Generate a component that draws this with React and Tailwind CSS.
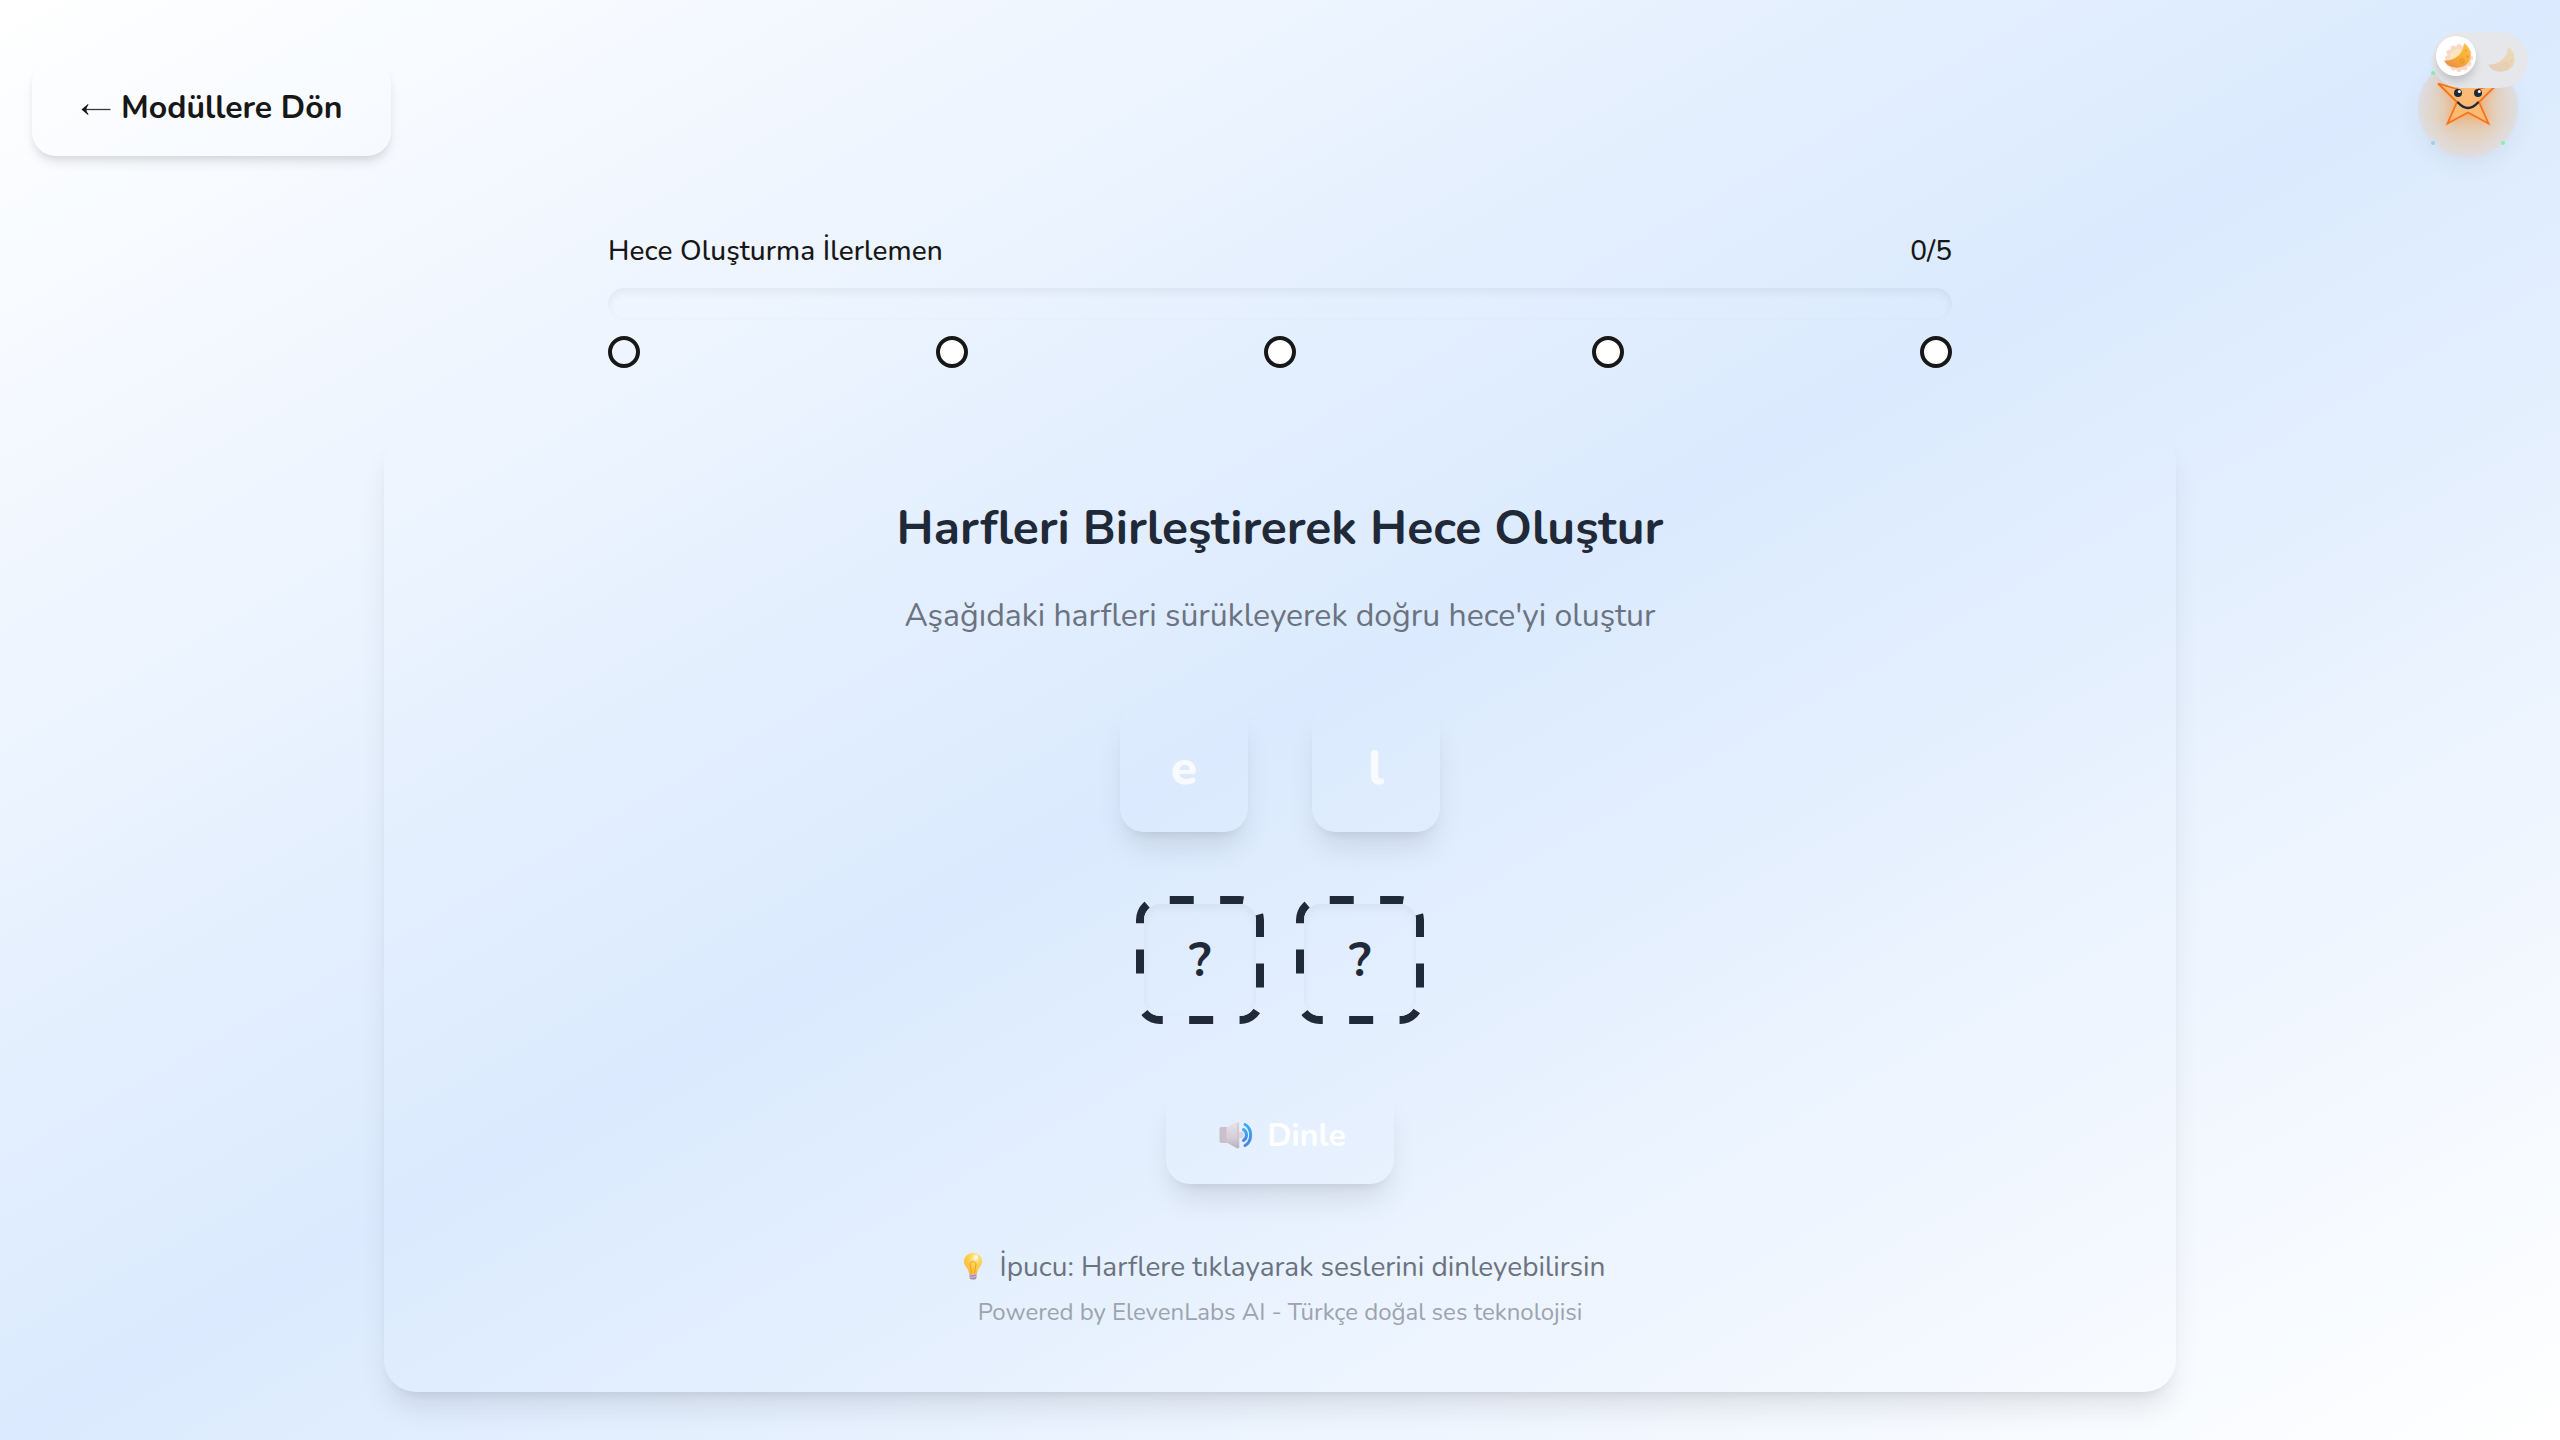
const SHADOW_LG = 'shadow-[0_20px_30px_-6px_rgba(0,0,0,0.1),0_8px_12px_-8px_rgba(0,0,0,0.1)]';
const SHADOW_MD = 'shadow-[0_8px_12px_-2px_rgba(0,0,0,0.1),0_4px_8px_-4px_rgba(0,0,0,0.1)]';

function ArrowLeft() {
  return (
    <svg width="32" height="16" viewBox="0 0 32 16" className="relative top-[2px] mr-[9px] shrink-0" aria-hidden="true">
      <path d="M6 7.500H30.5" stroke="#171717" strokeWidth="1.300" opacity="0.85" />
      <path d="M1.5 7.500L8 1.900L8.500 2.700C7 4.800 6.400 6.100 6.400 7.500C6.400 8.900 7 10.200 8.500 12.300L8 13.100Z" fill="#171717" />
    </svg>
  );
}

function Moon({ className }) {
  return (
    <svg width="40" height="40" viewBox="0 0 40 40" className={className} aria-hidden="true">
      <defs>
        <linearGradient id="moonFill" x1="0.9" y1="0.1" x2="0.3" y2="1">
          <stop offset="0" stopColor="#fbc04a" />
          <stop offset="0.55" stopColor="#f7ad34" />
          <stop offset="1" stopColor="#e8914a" />
        </linearGradient>
      </defs>
      <path d="M28 7C36.5 12.5 37 25 29 29.5C22 33.5 12.5 32 8 24.5C18 25.500 27.500 18.500 28 7Z" fill="url(#moonFill)" />
      <circle cx="26" cy="25" r="2.4" fill="#f2a032" stroke="#dd8b2e" strokeWidth="0.6" />
      <circle cx="31.6" cy="20.5" r="1.3" fill="#ee9a31" />
      <circle cx="18.5" cy="28.5" r="1.4" fill="#ee9a31" />
      <circle cx="30" cy="14.5" r="1" fill="#ee9a31" />
    </svg>
  );
}

function Sun() {
  const rays = Array.from({ length: 12 }, (_, i) => (i * Math.PI) / 6);
  return (
    <svg width="40" height="40" viewBox="0 0 40 40" className="absolute inset-0" aria-hidden="true">
      <g fill="#fad8c5">
        <circle cx="23" cy="22" r="12" />
        {rays.map((a) => (
          <circle key={a} cx={23 + 11.4 * Math.cos(a)} cy={22 + 11.4 * Math.sin(a)} r="2.6" />
        ))}
      </g>
      <circle cx="23" cy="22" r="9.3" fill="#fae6bd" />
    </svg>
  );
}

function StarMascot() {
  return (
    <div className="absolute left-[2418px] top-[58px] h-[100px] w-[100px]">
      <div className="h-full w-full rounded-full bg-[radial-gradient(circle,rgba(245,158,50,0.55)_0%,rgba(228,150,75,0.16)_70%)] shadow-[0_8px_24px_rgba(0,0,0,0.05)]" />
      <svg width="100" height="100" viewBox="0 0 100 100" className="absolute inset-0 drop-shadow-[0_0_6px_rgba(249,115,22,0.4)]" aria-hidden="true">
        <path
          d="M50 0L61 31L80 25.500L61 44L70.500 65.500L50 54.500L29.500 65.500L39 44L20 25.500L39 31Z"
          fill="#fdba74"
          stroke="#f97316"
          strokeWidth="1.8"
        />
        <circle cx="40" cy="35" r="4" fill="#1f2937" />
        <circle cx="60" cy="35" r="4" fill="#1f2937" />
        <circle cx="41.300" cy="33.500" r="1.500" fill="#fff" />
        <circle cx="61.300" cy="33.500" r="1.500" fill="#fff" />
        <path d="M40 44.500Q50 55.500 60 44.500" fill="none" stroke="#1f2937" strokeWidth="2.300" strokeLinecap="round" />
      </svg>
      <span className="absolute left-[13px] top-[13px] h-[4px] w-[4px] rounded-full bg-[#86efac]" />
      <span className="absolute left-[13px] top-[83px] h-[4px] w-[4px] rounded-full bg-[#93d0fd]" />
      <span className="absolute left-[83px] top-[83px] h-[4px] w-[4px] rounded-full bg-[#86efac]" />
    </div>
  );
}

function ThemeToggle() {
  return (
    <div className="absolute left-[2432px] top-[32px] h-[56px] w-[96px] rounded-full bg-[#e5e7eb]">
      <div className="absolute left-[4px] top-[4px] h-[40px] w-[40px] rounded-full bg-white shadow-[0_8px_12px_-2px_rgba(0,0,0,0.12),0_4px_8px_-2px_rgba(0,0,0,0.1)]">
        <Sun />
        <Moon className="absolute inset-0" />
      </div>
      <Moon className="absolute left-[48px] top-[8px] opacity-30" />
    </div>
  );
}

function Speaker() {
  return (
    <svg width="34" height="32" viewBox="0 0 34 32" className="shrink-0" aria-hidden="true">
      <defs>
        <linearGradient id="cone" x1="0" y1="0" x2="0" y2="1">
          <stop offset="0" stopColor="#e9e4ea" />
          <stop offset="0.6" stopColor="#d6cedb" />
          <stop offset="1" stopColor="#b9adbf" />
        </linearGradient>
        <linearGradient id="wave" x1="0" y1="0" x2="0" y2="1">
          <stop offset="0" stopColor="#35aef5" />
          <stop offset="1" stopColor="#4a83ea" />
        </linearGradient>
      </defs>
      <g fill="none" stroke="url(#wave)" strokeWidth="3" strokeLinecap="round">
        <path d="M26 4.500C33.500 8.500 33.500 21.500 26 25.500" />
        <path d="M24.500 9.500C28.500 12 28.500 18 24.500 20.500" />
      </g>
      <circle cx="21.500" cy="15" r="3.300" fill="#dcd5df" />
      <rect x="0.500" y="7" width="9" height="16" rx="1.800" fill="#c9c0cc" />
      <path d="M7.500 7.500L18 1.800C19.300 1.200 20.300 2 20.300 3.200V26.800C20.300 28 19.300 28.800 18 28.200L7.500 22.500Z" fill="url(#cone)" />
      <path d="M18.900 3V27" stroke="#c3b9c8" strokeWidth="0.800" />
    </svg>
  );
}

function Bulb() {
  return (
    <svg width="20" height="30" viewBox="0 0 20 30" className="shrink-0" aria-hidden="true">
      <defs>
        <radialGradient id="glass" cx="0.62" cy="0.25" r="0.8">
          <stop offset="0" stopColor="#fff3b0" />
          <stop offset="0.4" stopColor="#ffd257" />
          <stop offset="1" stopColor="#fdb52e" />
        </radialGradient>
      </defs>
      <rect x="6.500" y="20" width="7" height="7.500" rx="2" fill="#a58fb0" />
      <path d="M6.500 23L13.500 22M6.800 25.500L13.300 24.500" stroke="#d4c4dc" strokeWidth="0.900" />
      <path d="M10 1C15 1 19 4.800 19 9.600C19 14.500 14.500 16 14 21.500C12 22.500 8 22.500 6 21.500C5.500 16 1 14.500 1 9.600C1 4.800 5 1 10 1Z" fill="url(#glass)" />
      <path d="M8.500 21L7 12C7 9 13 9 13 12L11.500 21" fill="none" stroke="#f2a021" strokeWidth="1" />
      <ellipse cx="13" cy="5.500" rx="2" ry="2.600" fill="#fffbe5" />
    </svg>
  );
}

function LetterTile({ letter }) {
  return (
    <div className={`flex h-32 w-32 items-center justify-center rounded-3xl text-[48px] leading-[64px] font-extrabold text-[#f9fafb] ${SHADOW_LG}`}>
      {letter}
    </div>
  );
}

function DropSlot() {
  return (
    <div className="relative flex h-32 w-32 items-center justify-center rounded-3xl border-8 border-transparent text-[48px] leading-[64px] font-bold text-[#1f2937] shadow-[inset_0_4px_8px_rgba(0,0,0,0.05)]">
      <svg width="128" height="128" viewBox="0 0 128 128" className="absolute -left-2 -top-2" aria-hidden="true">
        <clipPath id="slotRing">
          <path
            clipRule="evenodd"
            d="M0 104V24A24 24 0 0 1 24 0H104A24 24 0 0 1 128 24V104A24 24 0 0 1 104 128H24A24 24 0 0 1 0 104ZM8 104V24A16 16 0 0 1 24 8H104A16 16 0 0 1 120 24V104A16 16 0 0 1 104 120H24A16 16 0 0 1 8 104Z"
          />
        </clipPath>
        <path
          clipPath="url(#slotRing)"
          d="M0 104V24A24 24 0 0 1 24 0H104A24 24 0 0 1 128 24V104A24 24 0 0 1 104 128H24A24 24 0 0 1 0 104"
          fill="none"
          stroke="#1f2937"
          strokeWidth="16"
          strokeDasharray="24 26.4"
          strokeDashoffset="24"
        />
      </svg>
      ?
    </div>
  );
}

export default function App() {
  return (
    <div className="relative h-[1440px] w-full overflow-hidden bg-[linear-gradient(to_bottom_right,#ffffff,#dbeafe,#ffffff)] font-['Nunito',sans-serif] text-[#171717]">
      <header className="flex h-[231px] px-8 pt-[60px]">
        <button className={`flex h-[96px] items-center rounded-3xl pl-12 pr-[49px] text-[32px] leading-[48px] font-bold ${SHADOW_MD}`}>
          <ArrowLeft />
          Modüllere Dön
        </button>
      </header>

      <section className="mx-auto w-[1344px]">
        <div className="mb-[17px] flex justify-between text-[28px] leading-[40px] font-medium">
          <span className="tracking-[0.12px]">Hece Oluşturma İlerlemen</span>
          <span>0/5</span>
        </div>
        <div className="h-8 rounded-full shadow-[inset_0_4px_8px_rgba(0,0,0,0.06)]" />
        <div className="mt-4 flex justify-between">
          <span className="h-8 w-8 rounded-full border-4 border-[#171717]" />
          <span className="h-8 w-8 rounded-full border-4 border-[#171717] bg-white" />
          <span className="h-8 w-8 rounded-full border-4 border-[#171717] bg-white" />
          <span className="h-8 w-8 rounded-full border-4 border-[#171717] bg-white" />
          <span className="h-8 w-8 rounded-full border-4 border-[#171717] bg-white" />
        </div>
      </section>

      <main className={`mx-auto mt-16 flex h-[960px] w-[1792px] flex-col items-center rounded-[32px] p-16 ${SHADOW_LG}`}>
        <h1 className="text-[48px] leading-[64px] font-bold text-[#1f2937]">Harfleri Birleştirerek Hece Oluştur</h1>
        <p className="mt-8 text-[32px] leading-[48px] text-[#6b7280]">Aşağıdaki harfleri sürükleyerek doğru hece'yi oluştur</p>
        <div className="mt-16 flex gap-16">
          <LetterTile letter="e" />
          <LetterTile letter="l" />
        </div>
        <div className="mt-16 flex gap-8">
          <DropSlot />
          <DropSlot />
        </div>
        <button className={`mt-16 flex h-24 w-[228px] items-center justify-center gap-[14px] rounded-3xl pl-[5px] text-[32px] leading-[48px] font-bold text-white ${SHADOW_LG}`}>
          <Speaker />
          Dinle
        </button>
        <p className="mt-[63px] flex items-center gap-[17px] pl-2 text-[28px] leading-[40px] text-[#6b7280]">
          <Bulb />
          İpucu: Harflere tıklayarak seslerini dinleyebilirsin
        </p>
        <p className="mt-[9px] text-[24px] leading-[32px] text-[#9ca3af]">Powered by ElevenLabs AI - Türkçe doğal ses teknolojisi</p>
      </main>

      <StarMascot />
      <ThemeToggle />
    </div>
  );
}
